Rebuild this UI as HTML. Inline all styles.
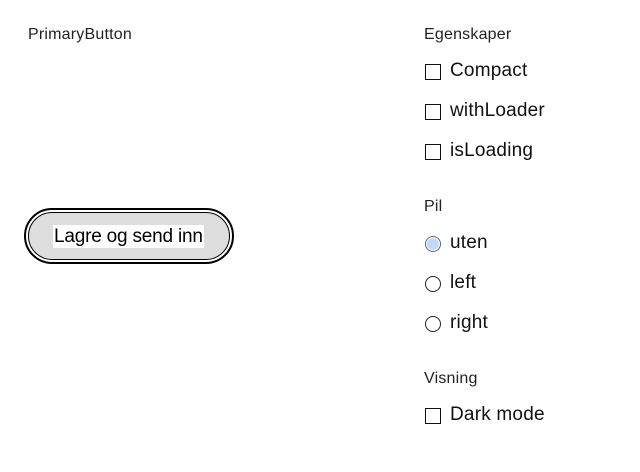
<!DOCTYPE html>
<html><head><style>
body{margin:0;width:640px;height:472px;background:#fff;font-family:"Liberation Sans",sans-serif;color:#111;position:relative;overflow:hidden}
.a{position:absolute}
.h{font-size:16px;color:#222;letter-spacing:0.2px}
.cb{position:absolute;width:16px;height:16px;border:1px solid #111;box-sizing:border-box;left:425px;background:#fff}
.rb{position:absolute;width:16px;height:16px;border:1px solid #222;border-radius:50%;box-sizing:border-box;left:425px;background:#fff}
.l{position:absolute;left:450px;font-size:19px;color:#111;letter-spacing:0.2px}
</style></head><body>
<div class="a h" style="left:28px;top:26px">PrimaryButton</div>
<div class="a" style="left:24px;top:208px;width:210px;height:56px;border:2px solid #000;border-radius:28px;box-sizing:border-box;background:#fff"></div>
<div class="a" style="left:28px;top:212px;width:202px;height:48px;border:1px solid #000;border-radius:24px;box-sizing:border-box;background:#ddd"></div>
<div class="a" style="left:53px;top:225px;height:23px;line-height:23px;background:#fff;font-size:19px;color:#000;padding:0 1px;letter-spacing:-0.2px">Lagre og send inn</div>

<div class="a h" style="left:424px;top:26px">Egenskaper</div>
<div class="cb" style="top:64px"></div><div class="l" style="top:60px">Compact</div>
<div class="cb" style="top:104px"></div><div class="l" style="top:100px">withLoader</div>
<div class="cb" style="top:144px"></div><div class="l" style="top:140px">isLoading</div>

<div class="a h" style="left:424px;top:198px">Pil</div>
<div class="rb" style="top:236px;border-color:#666"><div style="position:absolute;left:1px;top:1px;width:12px;height:12px;border-radius:50%;background:#c0d8fa"></div></div><div class="l" style="top:232px">uten</div>
<div class="rb" style="top:276px"></div><div class="l" style="top:272px">left</div>
<div class="rb" style="top:316px"></div><div class="l" style="top:312px">right</div>

<div class="a h" style="left:424px;top:370px">Visning</div>
<div class="cb" style="top:408px"></div><div class="l" style="top:404px">Dark mode</div>
</body></html>
